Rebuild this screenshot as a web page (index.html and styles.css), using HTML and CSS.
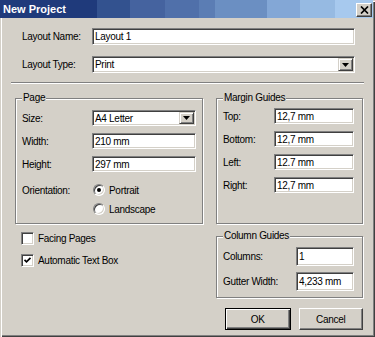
FILE: index.html
```html
<!DOCTYPE html>
<html>
<head>
<meta charset="utf-8">
<title>New Project</title>
<link rel="stylesheet" href="styles.css">
</head>
<body>
<div class="dialog">
  <div class="titlebar">
    <span class="title">New Project</span>
    <span class="close-btn"><svg width="9" height="8" viewBox="0 0 9 8"><path d="M1 0.5L8 7.5M8 0.5L1 7.5" stroke="#000" stroke-width="1.7"/></svg></span>
  </div>

  <div class="top">
    <div class="trow"><span class="tlabel">Layout Name:</span><div class="field tfield">Layout 1</div></div>
    <div class="trow trow2"><span class="tlabel">Layout Type:</span><div class="field tfield select"><span class="seltext">Print</span><span class="drop"><svg width="7" height="4" viewBox="0 0 7 4"><polygon points="0,0 7,0 3.5,4" fill="#000"/></svg></span></div></div>
  </div>

  <div class="sep"></div>

  <div class="grid">
    <fieldset class="group page">
      <legend>Page</legend>
      <div class="row"><span class="plabel">Size:</span><div class="field pfield select"><span class="seltext">A4 Letter</span><span class="drop"><svg width="7" height="4" viewBox="0 0 7 4"><polygon points="0,0 7,0 3.5,4" fill="#000"/></svg></span></div></div>
      <div class="row gap"><span class="plabel">Width:</span><div class="field pfield">210 mm</div></div>
      <div class="row gap"><span class="plabel">Height:</span><div class="field pfield">297 mm</div></div>
      <div class="row orient"><span class="plabel">Orientation:</span><span class="radio"><span class="dot"></span></span><span class="rlabel">Portrait</span></div>
      <div class="row land"><span class="plabel"></span><span class="radio"></span><span class="rlabel">Landscape</span></div>
    </fieldset>

    <fieldset class="group margins">
      <legend>Margin Guides</legend>
      <div class="row"><span class="mlabel">Top:</span><div class="field mfield">12,7 mm</div></div>
      <div class="row gap"><span class="mlabel">Bottom:</span><div class="field mfield">12,7 mm</div></div>
      <div class="row gap"><span class="mlabel">Left:</span><div class="field mfield">12.7 mm</div></div>
      <div class="row gap"><span class="mlabel">Right:</span><div class="field mfield">12,7 mm</div></div>
    </fieldset>

    <div class="checks">
      <div class="crow"><span class="checkbox"></span><span class="clabel">Facing Pages</span></div>
      <div class="crow crow2"><span class="checkbox"><svg width="9" height="9" viewBox="0 0 9 9"><polyline points="1.5,3.8 3.5,5.8 7.5,1.8" fill="none" stroke="#000" stroke-width="1.7"/></svg></span><span class="clabel">Automatic Text Box</span></div>
    </div>

    <div class="rightcol">
      <fieldset class="group columns">
        <legend>Column Guides</legend>
        <div class="row crowf"><span class="colabel">Columns:</span><div class="field cfield">1</div></div>
        <div class="row crowf gap2"><span class="colabel">Gutter Width:</span><div class="field cfield">4,233 mm</div></div>
      </fieldset>
      <div class="buttons">
        <button class="btn default">OK</button>
        <button class="btn">Cancel</button>
      </div>
    </div>
  </div>
</div>
</body>
</html>
```

FILE: styles.css
```css
html, body {
  margin: 0;
  padding: 0;
  background: #d4d0c8;
}

.dialog {
  width: 375px;
  height: 337px;
  box-sizing: border-box;
  overflow: hidden;
  background: #d4d0c8;
  font-family: "Liberation Sans", Arial, sans-serif;
  font-size: 10px;
  letter-spacing: -0.3px;
  color: #000;
  box-shadow: inset 1px 1px #d4d0c8, inset 2px 2px #fff, inset -1px -1px #404040, inset -2px -2px #808080;
}

.titlebar {
  height: 18px;
  width: 373px;
  display: flex;
  justify-content: space-between;
  align-items: flex-start;
  background: linear-gradient(to right,
    #1f3a7b 0, #1f3a7b 97px,
    #33528f 97px, #33528f 130px,
    #45639f 130px, #45639f 165px,
    #5070aa 165px, #5070aa 199px,
    #5b7db4 199px, #5b7db4 215px,
    #6b8fc2 215px, #6b8fc2 267px,
    #83a7d6 267px, #83a7d6 300px,
    #96bae2 300px, #96bae2 335px,
    #a7c9ee 335px, #a7c9ee 373px);
}

.title {
  color: #fff;
  font-weight: bold;
  font-size: 11px;
  letter-spacing: 0;
  line-height: 18px;
  padding-left: 3px;
}

.close-btn {
  width: 16px;
  height: 14px;
  margin-top: 3px;
  margin-right: 1px;
  box-sizing: border-box;
  background: #d4d0c8;
  border: 1px solid;
  border-color: #fff #404040 #404040 #fff;
  box-shadow: inset -1px -1px #808080;
  display: flex;
  align-items: center;
  justify-content: center;
}

.close-btn svg { display: block; }

.top {
  padding: 10px 0 0 22px;
}

.trow {
  display: flex;
  align-items: center;
  height: 17px;
}

.trow2 { margin-top: 11px; }

.tlabel { width: 70px; }

.field {
  box-sizing: border-box;
  background: #fff;
  border: 1px solid;
  border-color: #808080 #fff #fff #808080;
  box-shadow: inset 1px 1px #404040, inset -1px -1px #d4d0c8;
  padding: 0 2px;
  display: flex;
  align-items: center;
  white-space: nowrap;
}

.tfield { width: 263px; height: 17px; }

.select { padding-right: 0; }

.seltext { flex: 1; }

.drop {
  align-self: stretch;
  width: 15px;
  margin: 1px 1px 1px 0;
  box-sizing: border-box;
  background: #d4d0c8;
  border: 1px solid;
  border-color: #d4d0c8 #404040 #404040 #d4d0c8;
  box-shadow: inset 1px 1px #fff, inset -1px -1px #808080;
  display: flex;
  align-items: center;
  justify-content: center;
}

.drop svg { display: block; }

.sep {
  width: 353px;
  height: 0;
  margin: 9px 0 0 11px;
  border-top: 1px solid #808080;
  border-bottom: 1px solid #fff;
}

.grid {
  margin: 8px 0 0 15px;
  display: grid;
  grid-template-columns: 188px 147px;
  column-gap: 13px;
  row-gap: 6px;
  align-items: start;
}

.group {
  margin: 0;
  min-width: 0;
  box-sizing: border-box;
  border: 1px solid #808080;
  box-shadow: inset 1px 1px #fff, 1px 1px #fff;
}

.group legend {
  padding: 0 1px;
  margin: 0;
  line-height: 12px;
  font-size: 10px;
  background: #d4d0c8;
}

.page {
  height: 132px;
  padding: 6px 6px 0 6px;
}

.margins {
  height: 132px;
  padding: 4px 7px 0 6px;
}

.row {
  display: flex;
  align-items: center;
  height: 16px;
}

.row.gap { margin-top: 7px; }

.plabel { width: 70px; flex: none; }
.mlabel { width: 51px; flex: none; }

.pfield { width: 104px; height: 16px; }
.mfield { width: 80px; height: 16px; }

.orient { margin-top: 10px; }
.land { margin-top: 3px; }

.radio {
  width: 12px;
  height: 12px;
  margin-left: 1px;
  box-sizing: border-box;
  border-radius: 50%;
  background: #fff;
  border: 1px solid;
  border-color: #808080 #fff #fff #808080;
  box-shadow: inset 1px 1px #404040, inset -1px -1px #d4d0c8;
  display: flex;
  align-items: center;
  justify-content: center;
}

.dot {
  width: 4px;
  height: 4px;
  border-radius: 50%;
  background: #000;
}

.rlabel { margin-left: 4px; }

.checks {
  padding: 2px 0 0 6px;
}

.crow {
  display: flex;
  align-items: center;
  height: 13px;
}

.crow2 { margin-top: 9px; }

.checkbox {
  width: 13px;
  height: 13px;
  box-sizing: border-box;
  background: #fff;
  border: 1px solid;
  border-color: #808080 #fff #fff #808080;
  box-shadow: inset 1px 1px #404040, inset -1px -1px #d4d0c8;
  display: flex;
  align-items: center;
  justify-content: center;
}

.checkbox svg { display: block; }

.clabel { margin-left: 4px; }

.columns {
  padding: 5px 7px 6px 6px;
}

.crowf { height: 19px; }
.gap2 { margin-top: 6px; }

.colabel { width: 73px; flex: none; }
.cfield { width: 58px; height: 19px; }

.buttons {
  display: flex;
  gap: 8px;
  margin: 10px 0 0 9px;
}

.btn {
  width: 65px;
  height: 22px;
  padding: 0;
  margin: 0;
  box-sizing: border-box;
  font-family: "Liberation Sans", Arial, sans-serif;
  font-size: 10px;
  letter-spacing: -0.3px;
  color: #000;
  background: #d4d0c8;
  border: 1px solid;
  border-color: #fff #404040 #404040 #fff;
  box-shadow: inset -1px -1px #808080;
}

.btn.default {
  width: 66px;
  border: 1px solid #000;
  box-shadow: inset 1px 1px #fff, inset -1px -1px #404040, inset -2px -2px #808080;
}
```
